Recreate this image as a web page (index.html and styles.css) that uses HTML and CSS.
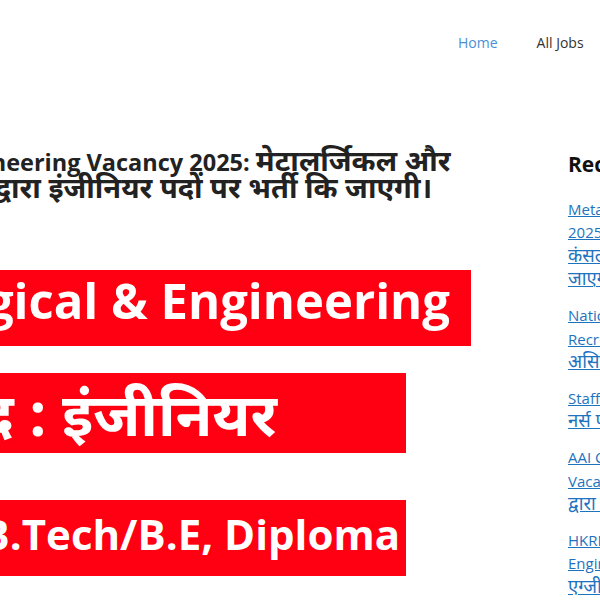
FILE: index.html
```html
<!DOCTYPE html>
<html lang="hi">
<head>
<meta charset="utf-8">
<title>Metallurgical &amp; Engineering Vacancy 2025</title>
<link rel="stylesheet" href="styles.css">
</head>
<body>
<div class="page">
  <header class="site-header">
    <nav>
      <ul class="nav">
        <li><a class="nav-link current" href="#">Home</a></li>
        <li><a class="nav-link" href="#">All Jobs</a></li>
        <li><a class="nav-link" href="#">Admit Card</a></li>
        <li><a class="nav-link" href="#">Result</a></li>
      </ul>
    </nav>
  </header>

  <div class="layout">
    <main class="content">
      <h1 class="entry-title">Metallurgical &amp; Engineering Vacancy 2025: <span class="dev">मेटालर्जिकल और इंजीनियरिंग कंसल्टेंट द्वारा इंजीनियर पदों पर भर्ती कि जाएगी।</span></h1>
      <figure class="poster">
        <div class="banner banner-one">Metallurgical &amp; Engineering</div>
        <div class="banner banner-two">पद : इंजीनियर</div>
        <div class="banner banner-three">B.Tech/B.E, Diploma</div>
      </figure>
    </main>

    <aside class="sidebar">
      <h2 class="widget-title">Recent Posts</h2>
      <ul class="recent">
        <li><a href="#">Metallurgical &amp; Engineering Vacancy<br>2025: <span class="dev">मेटालर्जिकल और इंजीनियरिंग<br>कंसल्टेंट द्वारा इंजीनियर पदों पर भर्ती कि<br>जाएगी।</span></a></li>
        <li><a href="#">National Fertilizers Limited<br>Recruitment 2025: <span class="dev">नेशनल फर्टिलाइजर्स<br>असिस्टेंट पदों पर भर्ती</span></a></li>
        <li><a href="#">Staff Nurse Vacancy 2025: <span class="dev">स्टाफ<br>नर्स पदों पर भर्ती</span></a></li>
        <li><a href="#">AAI Cargo Logistics<br>Vacancy 2025: <span class="dev">एयरपोर्ट अथॉरिटी<br>द्वारा भर्ती</span></a></li>
        <li><a href="#">HKRN Junior<br>Engineer Vacancy 2025:<br><span class="dev">एग्जीक्यूटिव पदों पर भर्ती</span></a></li>
      </ul>
    </aside>
  </div>
</div>
</body>
</html>
```
FILE: styles.css
```css
html, body {
  margin: 0;
  padding: 0;
  background: #ffffff;
  overflow: hidden;
}

body {
  font-family: "Open Sans", "Noto Sans", "Noto Sans Devanagari", sans-serif;
  color: #222222;
}

.page {
  width: 1200px;
}

.site-header {
  height: 84px;
  display: flex;
  align-items: center;
  padding-left: 458px;
}

.nav {
  display: flex;
  gap: 39px;
  list-style: none;
  margin: 0;
  padding: 0;
  font-size: 14px;
  white-space: nowrap;
}

.nav-link {
  color: #333333;
  text-decoration: none;
}

.nav-link.current {
  color: #4a8fd3;
}

.layout {
  display: flex;
  align-items: flex-start;
}

.content {
  flex: 0 0 763px;
  margin-left: -243px;
  padding-top: 65px;
}

.entry-title {
  margin: 0;
  font-size: 23.5px;
  line-height: 27px;
  font-weight: 700;
  color: #222222;
}

.dev {
  line-height: 0;
}

.entry-title .dev {
  font-size: 29px;
}

.poster {
  margin: 67px 0 0 23px;
  display: flex;
  flex-direction: column;
  align-items: flex-start;
}

.banner {
  background: #ff0012;
  color: #ffffff;
  font-weight: 700;
  white-space: nowrap;
  display: flex;
  align-items: center;
  box-sizing: border-box;
}

.banner-one {
  height: 76px;
  width: 691px;
  font-size: 49px;
  justify-content: flex-end;
  padding-right: 21px;
  padding-bottom: 16px;
}

.banner-two {
  margin-top: 27px;
  height: 80px;
  width: 626px;
  font-size: 60px;
  padding-left: 163px;
}

.banner-three {
  margin-top: 47px;
  height: 76px;
  width: 626px;
  font-size: 42px;
  justify-content: flex-end;
  padding-right: 6px;
  padding-bottom: 10px;
}

.sidebar {
  flex: 0 0 300px;
  margin-left: 48px;
  padding-top: 66px;
}

.widget-title {
  margin: 0 0 20px 0;
  font-size: 21px;
  line-height: 28px;
  font-weight: 700;
  color: #111111;
}

.recent {
  list-style: none;
  margin: 0;
  padding: 0;
  font-size: 15px;
  line-height: 23.4px;
}

.recent .dev {
  font-size: 18.5px;
}

.recent li {
  margin-bottom: 12.5px;
}

.recent a {
  color: #1e73be;
  text-decoration: underline;
}
```
